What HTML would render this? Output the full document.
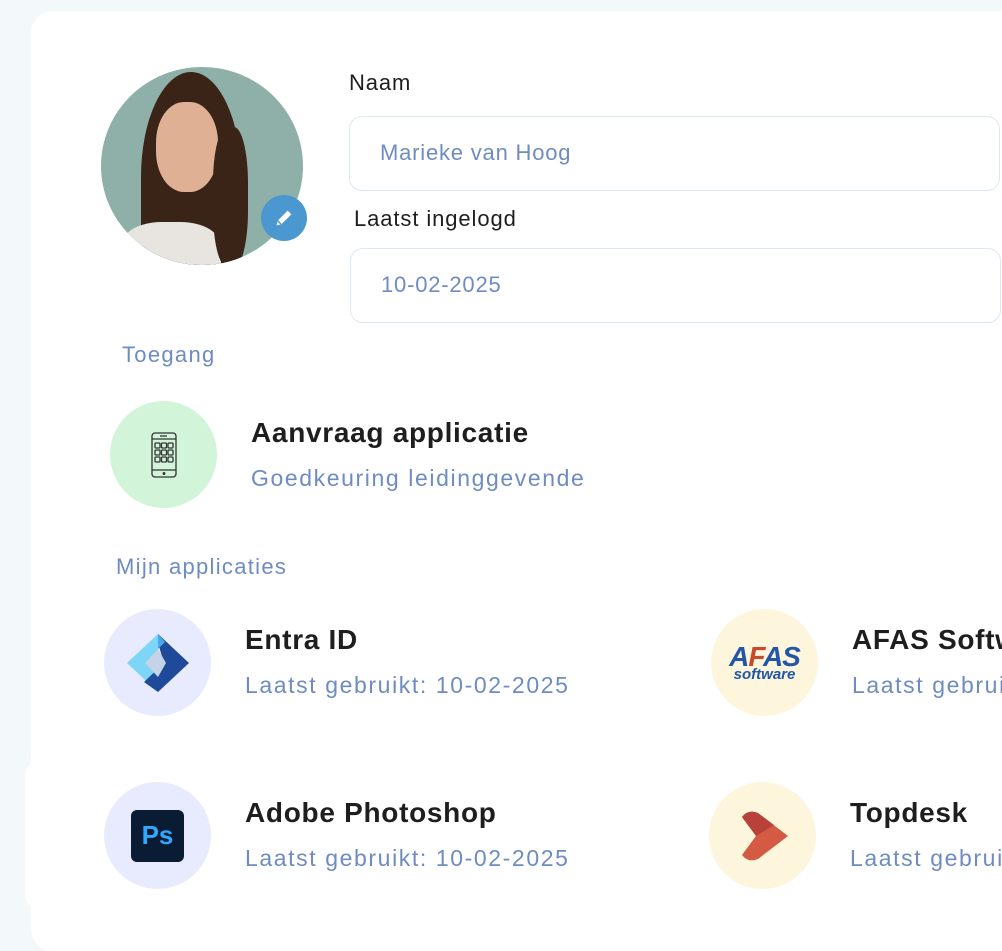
<!DOCTYPE html>
<html><head><meta charset="utf-8"><style>
*{margin:0;padding:0;box-sizing:border-box}
body{width:1002px;height:926px;overflow:hidden;background:#f3f8fb;font-family:"Liberation Sans",sans-serif;position:relative}
.card{position:absolute;left:31px;top:11px;width:1000px;height:940px;background:#fff;border-radius:22px}
.card2{position:absolute;left:25px;top:760px;width:1000px;height:150px;background:#fff;border-radius:16px}
.a{position:absolute;white-space:nowrap}
.lbl{font-size:22px;color:#1e1e1e;letter-spacing:.9px}
.inp{position:absolute;height:75px;width:651px;border:1.5px solid #dde8f3;border-radius:13px;font-size:22px;color:#6e8cc0;padding-left:30px;line-height:72px;letter-spacing:.8px}
.sec{font-size:22px;color:#6e8cc0;letter-spacing:1.3px}
.t{font-size:28px;font-weight:bold;color:#1e1e1e;letter-spacing:.7px}
.s{font-size:23px;color:#6e8cc0;letter-spacing:1.6px}
.c{position:absolute;width:107px;height:107px;border-radius:50%;display:flex;align-items:center;justify-content:center}
</style></head><body>
<div class="card"></div>
<div class="card2"></div>

<div class="a" style="left:101px;top:67px;width:202px;height:198px;border-radius:50%;overflow:hidden;background:#8fb0a8">
<div style="position:absolute;left:40px;top:5px;width:100px;height:210px;background:#3a2418;border-radius:50% 50% 20% 20%"></div>
<div style="position:absolute;left:55px;top:35px;width:62px;height:90px;background:#e0b095;border-radius:45%"></div>
<div style="position:absolute;left:20px;top:155px;width:100px;height:60px;background:#e8e4df;border-radius:40% 40% 0 0"></div>
<div style="position:absolute;left:112px;top:60px;width:35px;height:140px;background:#3a2418;border-radius:40%"></div>
</div>
<div class="a" style="left:261px;top:195px;width:46px;height:46px;border-radius:50%;background:#4b98d0;display:flex;align-items:center;justify-content:center">
<svg width="22" height="22" viewBox="0 0 24 24"><path d="M4 20l1-5L16 4l4 4L9 19z" fill="#fff"/><path d="M5 15l4 4" stroke="#4b98d0" stroke-width="1.5"/></svg>
</div>

<div class="a lbl" style="left:349px;top:70px">Naam</div>
<div class="inp" style="left:349px;top:116px">Marieke van Hoog</div>
<div class="a lbl" style="left:354px;top:206px">Laatst ingelogd</div>
<div class="inp" style="left:350px;top:248px">10-02-2025</div>

<div class="a sec" style="left:122px;top:342px">Toegang</div>
<div class="c" style="left:110px;top:401px;background:#d2f5d9">
<svg width="30" height="48" viewBox="0 0 30 48" fill="none" stroke="#333" stroke-width="1.3"><rect x="3" y="2" width="24" height="44" rx="3"/><line x1="3" y1="8" x2="27" y2="8"/><line x1="3" y1="39" x2="27" y2="39"/><line x1="11" y1="5" x2="18" y2="5"/><circle cx="15" cy="42.5" r=".8"/><g><rect x="6" y="12" width="5" height="5" rx="1"/><rect x="12.5" y="12" width="5" height="5" rx="1"/><rect x="19" y="12" width="5" height="5" rx="1"/><rect x="6" y="19" width="5" height="5" rx="1"/><rect x="12.5" y="19" width="5" height="5" rx="1"/><rect x="19" y="19" width="5" height="5" rx="1"/><rect x="6" y="26" width="5" height="5" rx="1"/><rect x="12.5" y="26" width="5" height="5" rx="1"/><rect x="19" y="26" width="5" height="5" rx="1"/></g></svg>
</div>
<div class="a t" style="left:251px;top:417px">Aanvraag applicatie</div>
<div class="a s" style="left:251px;top:465px">Goedkeuring leidinggevende</div>

<div class="a sec" style="left:116px;top:554px">Mijn applicaties</div>

<div class="c" style="left:104px;top:609px;background:#e7ebfd">
<svg width="62" height="58" viewBox="0 0 62 58"><path d="M31 0L0 29l31 29z" fill="#7dd5f8"/><path d="M31 0l31 29-31 29-14-10 20-19-6-20z" fill="#1e4a99"/><path d="M31 15l-13 14 13 14 8-14z" fill="#c4d3e6"/><path d="M31 0l7 8-7 7z" fill="#4aa8e6"/></svg>
</div>
<div class="a t" style="left:245px;top:624px">Entra ID</div>
<div class="a s" style="left:245px;top:672px">Laatst gebruikt: 10-02-2025</div>

<div class="c" style="left:711px;top:609px;background:#fdf5dc;flex-direction:column;line-height:1">
<div style="font-size:28px;font-weight:bold;font-style:italic;color:#2156a8;letter-spacing:-1px">A<span style="color:#c84a2c">F</span>AS</div>
<div style="font-size:15px;font-weight:bold;font-style:italic;color:#2156a8;margin-top:-4px">software</div>
</div>
<div class="a t" style="left:852px;top:624px">AFAS Software</div>
<div class="a s" style="left:852px;top:672px">Laatst gebruikt: 10-02-2025</div>

<div class="c" style="left:104px;top:782px;background:#e7ebfd">
<div style="width:53px;height:52px;background:#0a1c33;border-radius:6px;color:#31a8ff;font-size:26px;font-weight:bold;display:flex;align-items:center;justify-content:center">Ps</div>
</div>
<div class="a t" style="left:245px;top:797px">Adobe Photoshop</div>
<div class="a s" style="left:245px;top:845px">Laatst gebruikt: 10-02-2025</div>

<div class="c" style="left:709px;top:782px;background:#fdf5dc">
<svg width="56" height="54" viewBox="0 0 56 54" style="margin-left:6px"><path d="M4 8q6-8 16-4l30 23-30 23q-10 4-16-4l14-19z" fill="#d45a44"/><path d="M4 8q6-8 16-4l16 12-18 11z" fill="#b8423a"/></svg>
</div>
<div class="a t" style="left:850px;top:797px">Topdesk</div>
<div class="a s" style="left:850px;top:845px">Laatst gebruikt: 10-02-2025</div>
</body></html>
